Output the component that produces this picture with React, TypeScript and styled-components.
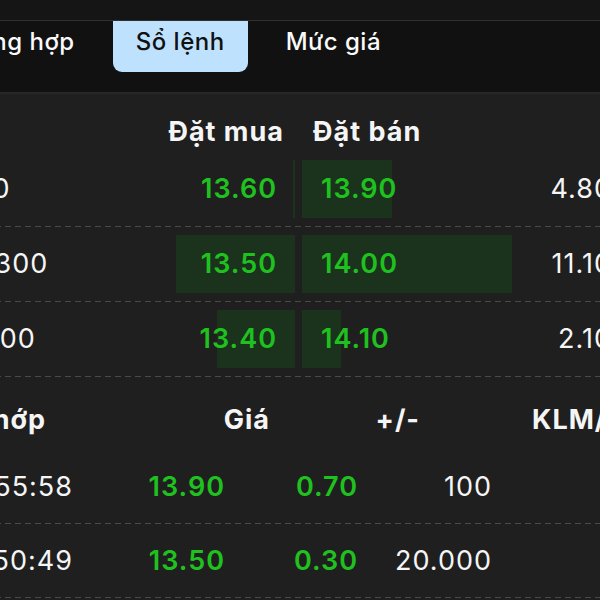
import styled, { createGlobalStyle } from 'styled-components';

const GlobalStyle = createGlobalStyle`
  html, body {
    margin: 0;
    padding: 0;
    background: #1f1f1f;
    overflow: hidden;
  }
  body {
    font-family: Inter, "Noto Sans", "Liberation Sans", sans-serif;
    color: #f5f5f5;
  }
`;

const green = '#1fc11f';
const barColor = '#1b331d';
const dash = `linear-gradient(to right, #4a4a4a 60%, transparent 0) bottom / 10px 1px repeat-x`;

const Panel = styled.div`
  width: 720px;
  margin-left: -60px;
  white-space: nowrap;
`;

const TopStrip = styled.div`
  height: 20px;
  background: #151515;
  border-bottom: 1px solid #303030;
`;

const TabBar = styled.div`
  display: flex;
  align-items: flex-start;
  gap: 15px;
  height: 71px;
  background: #111111;
  border-bottom: 2px solid #272727;
`;

const Tab = styled.div<{ $active?: boolean }>`
  height: 51px;
  line-height: 41px;
  padding: 0 23px;
  font-size: 24px;
  font-weight: 500;
  letter-spacing: 0.5px;
  border-radius: 0 0 9px 9px;
  color: ${(p) => (p.$active ? '#111' : '#fafafa')};
  background: ${(p) => (p.$active ? '#bee2fd' : 'transparent')};
`;

const BookGrid = styled.div`
  display: grid;
  grid-template-columns: 138px 210px 210px 111px;
  column-gap: 7px;
  font-size: 27px;
  letter-spacing: 1px;
`;

const BookHead = styled(BookGrid)`
  height: 58px;
  align-items: end;
  padding-bottom: 4px;
  box-sizing: border-box;
  font-weight: 700;
`;

const HeadCell = styled.div<{ $align: 'left' | 'right' }>`
  text-align: ${(p) => p.$align};
  padding: ${(p) => (p.$align === 'right' ? '0 11px 0 0' : '0 0 0 11px')};
  line-height: 32px;
`;

const BookRow = styled(BookGrid)`
  height: 75px;
  padding: 8px 0 9px;
  box-sizing: border-box;
  align-items: stretch;
  background: ${dash};
`;

const Volume = styled.div<{ $align: 'left' | 'right' }>`
  line-height: 58px;
  text-align: ${(p) => p.$align};
  padding-left: ${(p) => (p.$align === 'left' ? '17px' : '0')};
`;

const Price = styled.div<{ $side: 'buy' | 'sell'; $fill: number }>`
  font-weight: 600;
  line-height: 58px;
  color: ${green};
  text-align: ${(p) => (p.$side === 'buy' ? 'right' : 'left')};
  padding: ${(p) => (p.$side === 'buy' ? '0 18px 0 0' : '0 0 0 19px')};
  background: linear-gradient(
    ${(p) => (p.$side === 'buy' ? 'to left' : 'to right')},
    ${barColor} ${(p) => p.$fill}px,
    transparent ${(p) => p.$fill}px
  );
`;

const TradeHead = styled.div`
  display: grid;
  grid-template-columns: 106px 224px 150px 1fr;
  height: 73px;
  padding-top: 27px;
  box-sizing: border-box;
  font-size: 27px;
  font-weight: 700;
  letter-spacing: 1px;
  line-height: 32px;
  div {
    display: flex;
    justify-content: flex-end;
  }
  div:last-child {
    justify-content: flex-start;
    padding-left: 112px;
  }
`;

const TradeRow = styled.div`
  display: grid;
  grid-template-columns: 133px 152px 133px 134px 1fr;
  height: 74px;
  padding-bottom: 1px;
  box-sizing: border-box;
  align-items: center;
  font-size: 27px;
  letter-spacing: 1px;
  line-height: 32px;
  background: ${dash};
`;

const Cell = styled.div<{ $green?: boolean }>`
  text-align: right;
  color: ${(p) => (p.$green ? green : '#f5f5f5')};
  font-weight: ${(p) => (p.$green ? 600 : 400)};
`;

const book = [
  { buyVol: '200', buy: '13.60', buyFill: 2, sell: '13.90', sellFill: 90, sellVol: '4.800' },
  { buyVol: '12.300', buy: '13.50', buyFill: 119, sell: '14.00', sellFill: 210, sellVol: '11.100' },
  { buyVol: '5.000', buy: '13.40', buyFill: 78, sell: '14.10', sellFill: 39, sellVol: '2.100' },
];

const trades = [
  { time: '14:55:58', price: '13.90', change: '0.70', vol: '100' },
  { time: '14:50:49', price: '13.50', change: '0.30', vol: '20.000' },
];

const App = () => {
  return (
    <>
      <GlobalStyle />
      <Panel>
        <TopStrip />
        <TabBar>
          <Tab>Tổng hợp</Tab>
          <Tab $active>Sổ lệnh</Tab>
          <Tab>Mức giá</Tab>
        </TabBar>
        <BookHead>
          <div />
          <HeadCell $align="right">Đặt mua</HeadCell>
          <HeadCell $align="left">Đặt bán</HeadCell>
          <div />
        </BookHead>
        {book.map((r) => (
          <BookRow key={r.buy}>
            <Volume $align="left">{r.buyVol}</Volume>
            <Price $side="buy" $fill={r.buyFill}>
              {r.buy}
            </Price>
            <Price $side="sell" $fill={r.sellFill}>
              {r.sell}
            </Price>
            <Volume $align="right">{r.sellVol}</Volume>
          </BookRow>
        ))}
        <TradeHead>
          <div>TG khớp</div>
          <div>Giá</div>
          <div>+/-</div>
          <div>KLM/B</div>
        </TradeHead>
        {trades.map((t) => (
          <TradeRow key={t.time}>
            <Cell>{t.time}</Cell>
            <Cell $green>{t.price}</Cell>
            <Cell $green>{t.change}</Cell>
            <Cell>{t.vol}</Cell>
            <div />
          </TradeRow>
        ))}
      </Panel>
    </>
  );
};

export default App;
